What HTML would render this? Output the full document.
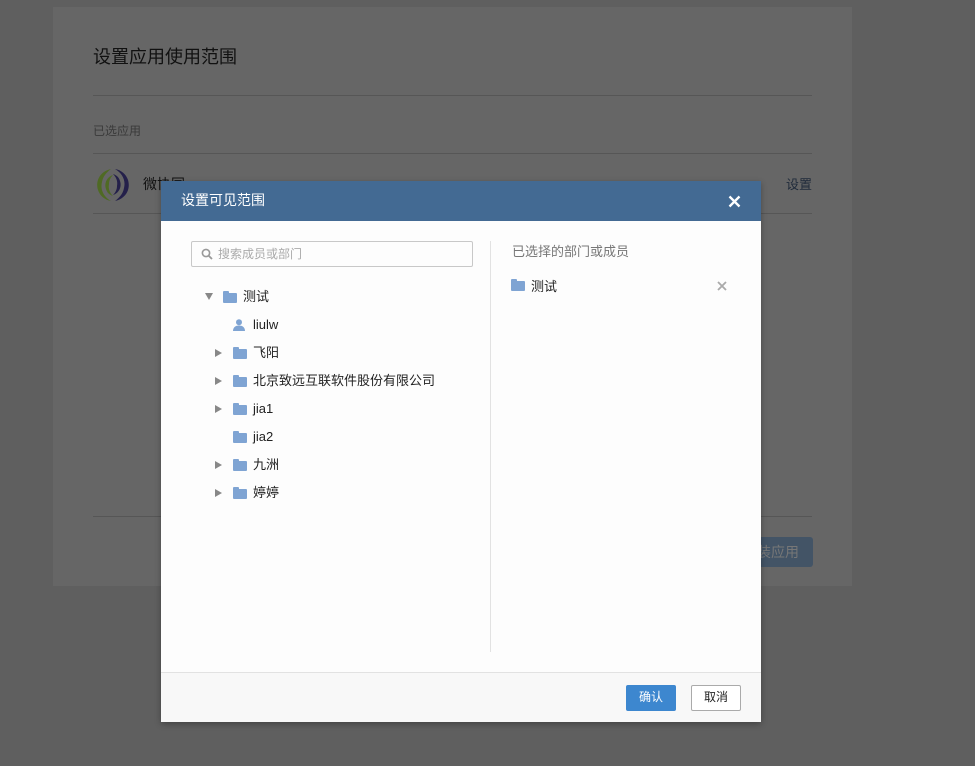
<!DOCTYPE html>
<html><head><meta charset="utf-8"><style>
*{margin:0;padding:0;box-sizing:border-box}
body{width:975px;height:766px;background:#5f5f5f;position:relative;overflow:hidden;font-family:"Liberation Sans","Noto Sans CJK SC",sans-serif;font-size:13px;color:#222}
.abs{position:absolute;white-space:nowrap}
.card{left:53px;top:7px;width:799px;height:579px;background:#666}
.fold{position:absolute;width:14px;height:10px;background:#7fa4d3;border-radius:1px}
.fold:before{content:"";position:absolute;left:0;top:-2px;width:6px;height:3px;background:#7fa4d3;border-radius:1px 1px 0 0}
.arr{position:absolute;width:0;height:0;border-top:4px solid transparent;border-bottom:4px solid transparent;border-left:7px solid #888}
.row{position:absolute;height:28px;line-height:28px;font-size:13px;color:#222;white-space:nowrap}
</style></head><body>
<div class="abs card"></div>
<div class="abs" style="left:93px;top:43px;font-size:18px;color:#111">设置应用使用范围</div>
<div class="abs" style="left:93px;top:95px;width:719px;height:1px;background:#565656"></div>
<div class="abs" style="left:93px;top:122px;font-size:12px;color:#3a3a3a">已选应用</div>
<div class="abs" style="left:93px;top:153px;width:719px;height:1px;background:#565656"></div>
<svg class="abs" style="left:94px;top:166px" width="38" height="38" viewBox="0 0 38 38">
<path d="M17 3C7 5 1 14 4 24c2 6 7 10 13 11C10 31 6 24 8 16c1-6 5-10 9-13z" fill="#4f6a24"/>
<path d="M19 9c-6 2-9 8-7 14 1 4 4 6 7 7-3-3-5-7-4-12 0-4 2-7 4-9z" fill="#4f6a24"/>
<path d="M21 35c10-2 16-11 13-21-2-6-7-10-13-11 7 4 11 11 9 19-1 6-5 10-9 13z" fill="#24204a"/>
<path d="M19 29c6-2 9-8 7-14-1-4-4-6-7-7 3 3 5 7 4 12 0 4-2 7-4 9z" fill="#24204a"/>
</svg>
<div class="abs" style="left:143px;top:174px;font-size:14px;color:#111">微协同</div>
<div class="abs" style="left:786px;top:174px;font-size:13px;color:#1f2a3a">设置</div>
<div class="abs" style="left:93px;top:213px;width:719px;height:1px;background:#565656"></div>
<div class="abs" style="left:93px;top:516px;width:719px;height:1px;background:#565656"></div>
<div class="abs" style="left:700px;top:537px;width:113px;height:30px;background:#435466;border-radius:3px;color:#777;font-size:14px;line-height:30px;text-align:right;padding-right:14px">安装应用</div>

<div class="abs" style="left:161px;top:181px;width:600px;height:541px;background:#fdfdfd;box-shadow:0 2px 6px rgba(0,0,0,.3)">
 <div style="height:40px;background:#436a93;color:#fff;font-size:14px;line-height:38px;padding-left:20px">设置可见范围</div>
 <svg class="abs" style="left:567px;top:14px" width="13" height="13" viewBox="0 0 13 13"><path d="M1.5 1.5L11.5 11.5M11.5 1.5L1.5 11.5" stroke="#fff" stroke-width="2.3"/></svg>
 <div class="abs" style="left:30px;top:60px;width:282px;height:26px;border:1px solid #c8c8c8;border-radius:2px"></div>
 <svg class="abs" style="left:40px;top:67px" width="12" height="12" viewBox="0 0 12 12"><circle cx="5" cy="5" r="3.6" fill="none" stroke="#999" stroke-width="1.6"/><path d="M7.7 7.7L11 11" stroke="#999" stroke-width="1.8"/></svg>
 <div class="abs" style="left:57px;top:64px;font-size:12px;color:#aaa">搜索成员或部门</div>
 <div class="abs" style="left:329px;top:60px;width:1px;height:411px;background:#e2e2e2"></div>
 <div class="abs" style="left:351px;top:60px;font-size:13px;color:#777">已选择的部门或成员</div>
 <div class="fold" style="left:350px;top:100px"></div>
 <div class="abs" style="left:370px;top:95px;font-size:13px;color:#222">测试</div>
 <svg class="abs" style="left:556px;top:100px" width="10" height="10" viewBox="0 0 10 10"><path d="M1 1L9 9M9 1L1 9" stroke="#aaa" stroke-width="1.8"/></svg>

 <div style="position:absolute;left:0;top:102px;width:320px">
  <div class="arr" style="left:44px;top:10px;border-left:4px solid transparent;border-right:4px solid transparent;border-top:7px solid #888;border-bottom:0"></div>
  <div class="fold" style="left:62px;top:10px"></div>
  <div class="row" style="left:82px;top:0">测试</div>
  <svg class="abs" style="left:72px;top:36px" width="12" height="12" viewBox="0 0 12 12"><circle cx="6" cy="3.3" r="3" fill="#7fa4d3"/><path d="M0 12c0-4 3-5.5 6-5.5s6 1.5 6 5.5z" fill="#7fa4d3"/></svg>
  <div class="row" style="left:92px;top:28px">liulw</div>
  <div class="arr" style="left:54px;top:66px"></div><div class="fold" style="left:72px;top:66px"></div><div class="row" style="left:92px;top:56px">飞阳</div>
  <div class="arr" style="left:54px;top:94px"></div><div class="fold" style="left:72px;top:94px"></div><div class="row" style="left:92px;top:84px">北京致远互联软件股份有限公司</div>
  <div class="arr" style="left:54px;top:122px"></div><div class="fold" style="left:72px;top:122px"></div><div class="row" style="left:92px;top:112px">jia1</div>
  <div class="fold" style="left:72px;top:150px"></div><div class="row" style="left:92px;top:140px">jia2</div>
  <div class="arr" style="left:54px;top:178px"></div><div class="fold" style="left:72px;top:178px"></div><div class="row" style="left:92px;top:168px">九洲</div>
  <div class="arr" style="left:54px;top:206px"></div><div class="fold" style="left:72px;top:206px"></div><div class="row" style="left:92px;top:196px">婷婷</div>
 </div>

 <div class="abs" style="left:0;top:491px;width:600px;height:50px;background:#f8f8f8;border-top:1px solid #e2e2e2"></div>
 <div class="abs" style="left:465px;top:504px;width:50px;height:26px;background:#3d87cf;border-radius:2px;color:#fff;font-size:12px;line-height:25px;text-align:center">确认</div>
 <div class="abs" style="left:530px;top:504px;width:50px;height:26px;background:#fff;border:1px solid #aaa;border-radius:2px;color:#222;font-size:12px;line-height:23px;text-align:center">取消</div>
</div>
</body></html>
